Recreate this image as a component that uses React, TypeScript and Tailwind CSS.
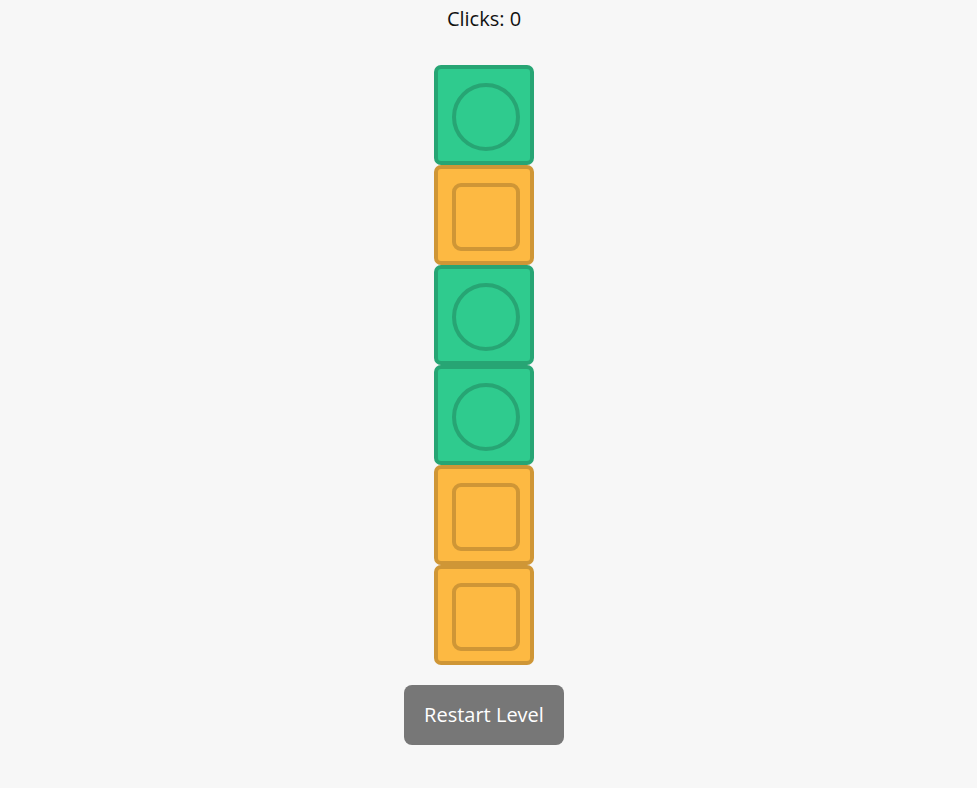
const tiles = ["circle", "square", "circle", "circle", "square", "square"];

function Tile({ kind }: { kind: string }) {
  if (kind === "circle") {
    return (
      <div className="w-[100px] h-[100px] rounded-[7px] border-4 border-[#27a574] bg-[#2fcb8e] pt-[14px] pl-[14px]">
        <div className="w-[68px] h-[68px] rounded-full border-4 border-[#27a574]" />
      </div>
    );
  }
  return (
    <div className="w-[100px] h-[100px] rounded-[7px] border-4 border-[#cf9636] bg-[#fdb942] pt-[14px] pl-[14px]">
      <div className="w-[68px] h-[68px] rounded-[9px] border-4 border-[#cf9636]" />
    </div>
  );
}

export default function App() {
  return (
    <div
      className="min-h-screen w-full bg-[#f7f7f7] flex flex-col items-center pt-[5px] pr-[9px]"
      style={{ fontFamily: '"Open Sans", sans-serif' }}
    >
      <div className="text-[20px] leading-[28px] text-[#111]">Clicks: 0</div>

      <div className="mt-[32px] flex flex-col">
        {tiles.map((t, i) => (
          <Tile key={i} kind={t} />
        ))}
      </div>

      <button className="mt-[20px] w-[160px] h-[60px] rounded-[8px] bg-[#777777] text-white text-[20px]">
        Restart Level
      </button>
    </div>
  );
}
